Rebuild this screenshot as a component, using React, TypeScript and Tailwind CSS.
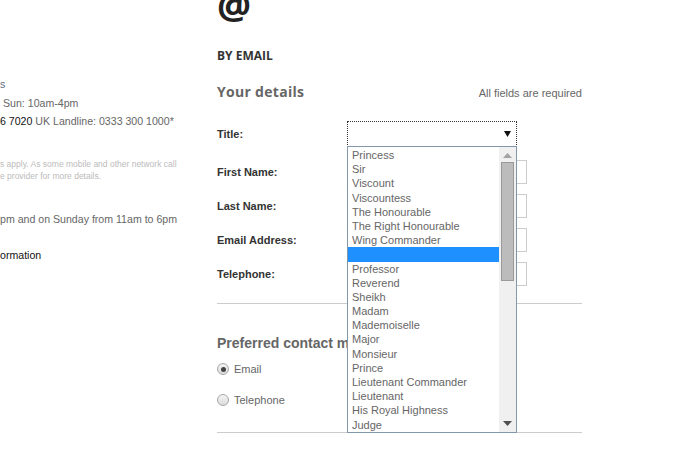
import React from "react";

const titles = [
  "Princess",
  "Sir",
  "Viscount",
  "Viscountess",
  "The Honourable",
  "The Right Honourable",
  "Wing Commander",
  "",
  "Professor",
  "Reverend",
  "Sheikh",
  "Madam",
  "Mademoiselle",
  "Major",
  "Monsieur",
  "Prince",
  "Lieutenant Commander",
  "Lieutenant",
  "His Royal Highness",
  "Judge",
];

const fields = ["First Name:", "Last Name:", "Email Address:", "Telephone:"];

const Radio = ({ checked }: { checked?: boolean }) => (
  <span className="flex h-[12px] w-[12px] items-center justify-center rounded-full border border-[#a8a8a8] bg-gradient-to-b from-[#f4f4f4] to-[#dcdcdc]">
    {checked && <span className="h-[5px] w-[5px] rounded-full bg-[#444]" />}
  </span>
);

const TitleDropdown = () => (
  <div className="absolute left-[130px] top-[146px] z-10 flex h-[287px] w-[170px] border border-[#8497a8] bg-white">
    <ul className="flex-1 pt-[1px]">
      {titles.map((t, i) => (
        <li
          key={i}
          className={`h-[14.2px] pl-[4px] text-[11px] leading-[14px] text-[#666] ${
            t === "" ? "bg-[#1e90ff]" : ""
          }`}
        >
          {t}
        </li>
      ))}
    </ul>
    {/* scrollbar */}
    <div className="flex w-[17px] flex-col items-center bg-[#f0f0f0]">
      <svg width="9" height="5" viewBox="0 0 9 5" className="mt-[6px]">
        <path d="M0 5 L4.5 0 L9 5 Z" fill="#a3a3a3" />
      </svg>
      <div className="mt-[4px] h-[119px] w-[13px] border border-[#9a9a9a] bg-[#bcbcbc]" />
      <div className="flex-1" />
      <svg width="9" height="5" viewBox="0 0 9 5" className="mb-[6px]">
        <path d="M0 0 L9 0 L4.5 5 Z" fill="#505050" />
      </svg>
    </div>
  </div>
);

export default function App() {
  return (
    <div className="flex h-[458px] w-[684px] overflow-hidden bg-white font-['Liberation_Sans',Arial,sans-serif]">
      {/* left info column, clipped */}
      <div className="w-[217px] shrink-0 text-[10.6px] text-[#666]">
        <div className="mt-[77px] h-[14px] leading-[14px] text-[#5d6d82]">s</div>
        <div className="mt-[5px] h-[14px] pl-[3px] leading-[14px]">Sun: 10am-4pm</div>
        <div className="mt-[4px] h-[14px] leading-[14px]">
          <span className="text-[#111]">6 7020</span> UK Landline: 0333 300 1000*
        </div>
        <div className="mt-[30px] text-[8.5px] leading-[12px] text-[#bbb]">
          <div>s apply. As some mobile and other network call</div>
          <div>e provider for more details.</div>
        </div>
        <div className="mt-[30px] h-[14px] leading-[14px]">pm and on Sunday from 11am to 6pm</div>
        <div className="mt-[22px] h-[14px] leading-[14px] text-[#111]">ormation</div>
      </div>

      {/* email form column */}
      <div className="relative w-[365px] shrink-0">
        <div className="-mt-[14px] h-[36px] font-['Open_Sans',sans-serif] text-[38px] font-bold leading-[36px] text-[#222]">
          @
        </div>
        <div className="mt-[27px] font-['Open_Sans',sans-serif] text-[12px] font-bold leading-[14px] text-[#333]">
          BY EMAIL
        </div>
        <div className="mt-[18px] flex items-baseline justify-between">
          <span className="font-['Open_Sans',sans-serif] text-[14px] font-bold tracking-[0.3px] text-[#666]">
            Your details
          </span>
          <span className="text-[11px] text-[#666]">All fields are required</span>
        </div>

        <div className="mt-[19px] flex h-[26px] items-center">
          <span className="w-[130px] pt-[1px] text-[11px] font-bold text-[#333]">Title:</span>
          <div className="flex h-[26px] w-[170px] items-center justify-end border border-dotted border-[#333] bg-white pr-[5px]">
            <svg width="7" height="6" viewBox="0 0 7 6">
              <path d="M0 0 L7 0 L3.5 6 Z" fill="#111" />
            </svg>
          </div>
        </div>

        <div className="mt-[13px] flex flex-col gap-[10px]">
          {fields.map((f) => (
            <div key={f} className="flex h-[24px] items-center">
              <span className="w-[130px] text-[11px] font-bold text-[#333]">{f}</span>
              <div className="h-[24px] w-[180px] border border-[#ccc]" />
            </div>
          ))}
        </div>

        <div className="mt-[17px] h-px bg-[#ccc]" />

        <div className="mt-[31px] text-[14px] font-bold leading-[16px] text-[#666]">
          Preferred contact method
        </div>
        <div className="mt-[10px] flex items-center gap-[5px] text-[11px] text-[#666]">
          <Radio checked />
          <span>Email</span>
        </div>
        <div className="mt-[14px] flex items-center gap-[5px] text-[11px] text-[#666]">
          <Radio />
          <span>Telephone</span>
        </div>
        <div className="mt-[24px] h-px bg-[#ccc]" />

        <TitleDropdown />
      </div>
    </div>
  );
}
